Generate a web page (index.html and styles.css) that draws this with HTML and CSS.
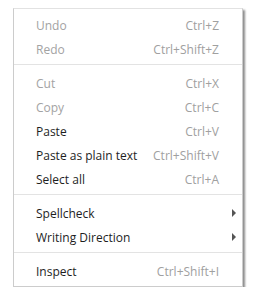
FILE: index.html
```html
<!DOCTYPE html>
<html lang="en">
<head>
  <meta charset="UTF-8">
  <title>Context menu</title>
  <link rel="stylesheet" href="styles.css">
</head>
<body>
  <div class="context-menu">
    <div class="menu-item is-disabled"><span class="item-label">Undo</span><span class="item-shortcut">Ctrl+Z</span><span class="item-arrow"></span></div>
    <div class="menu-item is-disabled"><span class="item-label">Redo</span><span class="item-shortcut">Ctrl+Shift+Z</span><span class="item-arrow"></span></div>
    <div class="menu-separator"></div>
    <div class="menu-item is-disabled"><span class="item-label">Cut</span><span class="item-shortcut">Ctrl+X</span><span class="item-arrow"></span></div>
    <div class="menu-item is-disabled"><span class="item-label">Copy</span><span class="item-shortcut">Ctrl+C</span><span class="item-arrow"></span></div>
    <div class="menu-item"><span class="item-label">Paste</span><span class="item-shortcut">Ctrl+V</span><span class="item-arrow"></span></div>
    <div class="menu-item"><span class="item-label">Paste as plain text</span><span class="item-shortcut">Ctrl+Shift+V</span><span class="item-arrow"></span></div>
    <div class="menu-item"><span class="item-label">Select all</span><span class="item-shortcut">Ctrl+A</span><span class="item-arrow"></span></div>
    <div class="menu-separator"></div>
    <div class="menu-item"><span class="item-label">Spellcheck</span><span class="item-shortcut"></span><span class="item-arrow"><span class="arrow-glyph"></span></span></div>
    <div class="menu-item"><span class="item-label">Writing Direction</span><span class="item-shortcut"></span><span class="item-arrow"><span class="arrow-glyph"></span></span></div>
    <div class="menu-separator"></div>
    <div class="menu-item"><span class="item-label">Inspect</span><span class="item-shortcut">Ctrl+Shift+I</span><span class="item-arrow"></span></div>
  </div>
</body>
</html>
```

FILE: styles.css
```css
:root {
  --text-color: #1e1e1e;
  --text-muted: #a3a3a3;
  --shortcut-color: #a0a0a0;
  --border-color: #cccccc;
  --separator-color: #e3e3e3;
}

body {
  margin: 0;
  background-color: #ffffff;
  font-family: "Open Sans", "Noto Sans", sans-serif;
  font-size: 12px;
}

.context-menu {
  width: 228px;
  margin: 8px 0 0 13px;
  padding: 4px 0 3px;
  background-color: #ffffff;
  border: 1px solid var(--border-color);
  border-top-color: #e2e2e2;
  box-shadow: 2px 2px 2px rgba(0, 0, 0, 0.45);
  display: flex;
  flex-direction: column;
}

.menu-item {
  display: flex;
  align-items: center;
  height: 24px;
  padding: 0 6px 0 22px;
  color: var(--text-color);
}

.menu-item.is-disabled {
  color: var(--text-muted);
}

.item-label {
  flex: 1;
  white-space: nowrap;
}

.item-shortcut {
  color: var(--shortcut-color);
  white-space: nowrap;
}

.item-arrow {
  width: 17px;
  display: flex;
  justify-content: flex-end;
}

.arrow-glyph {
  width: 0;
  height: 0;
  border-top: 4px solid transparent;
  border-bottom: 4px solid transparent;
  border-left: 4px solid #555555;
}

.menu-separator {
  height: 1px;
  margin: 3px 0 6px;
  background-color: var(--separator-color);
}
```
